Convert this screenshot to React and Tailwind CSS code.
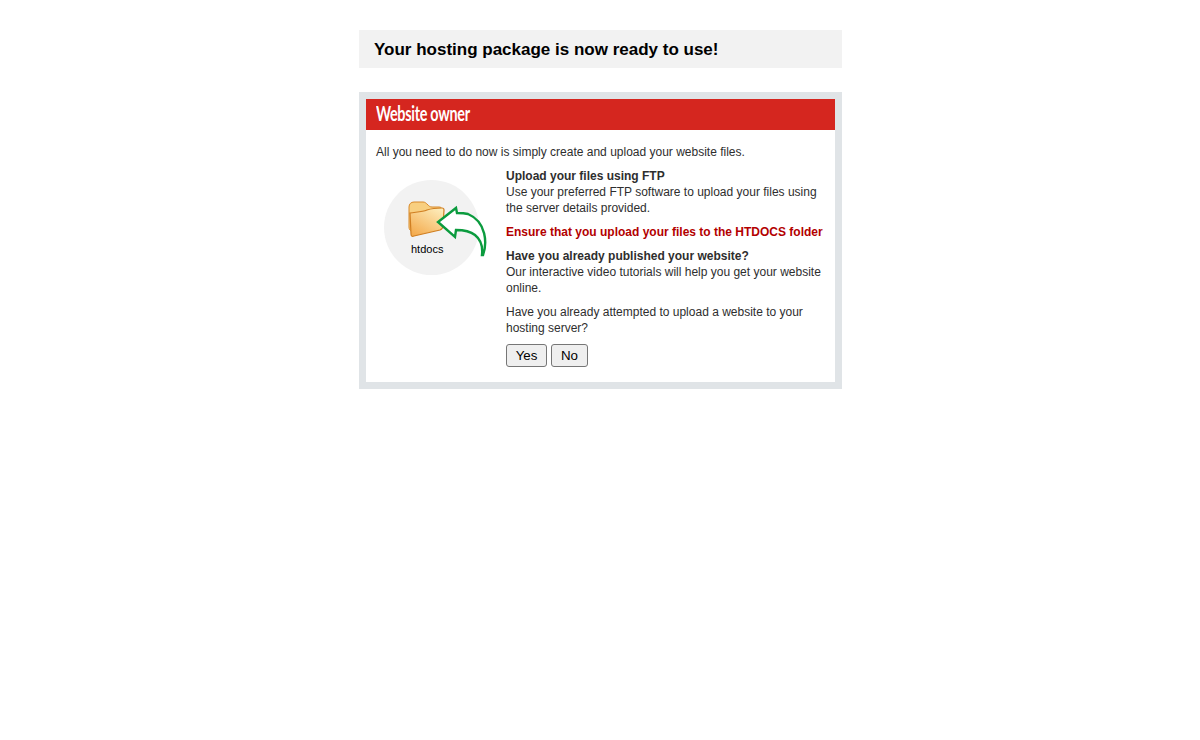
export default function App() {
  return (
    <div className="min-h-[740px] bg-white font-['Liberation_Sans',Arial,sans-serif] text-[12px] leading-4 text-[#2e2e2e]">
      <div className="ml-[359px] w-[483px] pt-[30px]">
        <div className="flex h-[38px] items-center bg-[#f2f2f2] pt-[1px] pl-[15px] text-[17px] font-bold text-black">
          Your hosting package is now ready to use!
        </div>
        <div className="mt-6 h-[297px] border-[7px] border-[#e0e4e7] bg-white">
          <div className="flex h-[31px] items-center bg-[#d5261f] pb-[3px] pl-[10px] text-white">
            <span className="inline-block origin-left scale-x-[0.72] font-['Lato',sans-serif] text-[20px] font-bold tracking-[-0.4px] whitespace-nowrap">
              Website owner
            </span>
          </div>
          <div className="px-[10px] pt-[14px]">
            <p>All you need to do now is simply create and upload your website files.</p>
            <div className="mt-2 flex">
              <div className="relative mt-[12px] ml-2 h-[95px] w-[122px] shrink-0">
                <div className="h-[95px] w-[95px] rounded-full bg-[#f2f2f2]" />
                <svg className="absolute top-[18px] left-[22px]" width="84" height="62" viewBox="0 0 84 62">
                  <defs>
                    <linearGradient id="fold" x1="0.9" y1="0" x2="0.2" y2="1">
                      <stop offset="0" stopColor="#fdeebd" />
                      <stop offset="1" stopColor="#f4ab4e" />
                    </linearGradient>
                  </defs>
                  <path d="M3 9c0-3 2-5 5-5h9c2 0 3 1 5 3 1 1 2 2 4 2h7c2 0 3 1 3 3v4L6 33C4 33 3 31 3 29Z" fill="#f8cf80" stroke="#d98a2a" strokeWidth="1" />
                  <path d="M4 15c6-1 12-1 17-3 6-2 11-2 15-2 1 0 2 1 2 2l-1 16c0 2-1 3-3 4L8 38c-2 1-3 0-3-2Z" fill="url(#fold)" stroke="#d07f22" strokeWidth="1.2" />
                  <path d="M77 57C81 46 81 24 62 16 58 15 55 15 51 15L50 10 32 24 49 39 50 32C58 32 64 33 69 37 74 41 77 48 76 57Z" fill="#ffffff" stroke="#0b9b3e" strokeWidth="2.4" strokeLinejoin="miter" />
                </svg>
                <span className="absolute top-[62px] left-[27px] text-[11px] leading-[14px] text-black">htdocs</span>
              </div>
              <div className="w-[323px]">
                <p className="font-bold">Upload your files using FTP</p>
                <p>Use your preferred FTP software to upload your files using the server details provided.</p>
                <p className="mt-2 font-bold text-[#b30000]">Ensure that you upload your files to the HTDOCS folder</p>
                <p className="mt-2 font-bold">Have you already published your website?</p>
                <p>Our interactive video tutorials will help you get your website online.</p>
                <p className="mt-2">Have you already attempted to upload a website to your hosting server?</p>
                <div className="mt-2 flex gap-1">
                  <button className="h-[23px] w-[41px] rounded-[3px] border border-[#767676] bg-[#efefef] text-[13.33px] text-black">Yes</button>
                  <button className="h-[23px] w-[37px] rounded-[3px] border border-[#767676] bg-[#efefef] text-[13.33px] text-black">No</button>
                </div>
              </div>
            </div>
          </div>
        </div>
      </div>
    </div>
  );
}
